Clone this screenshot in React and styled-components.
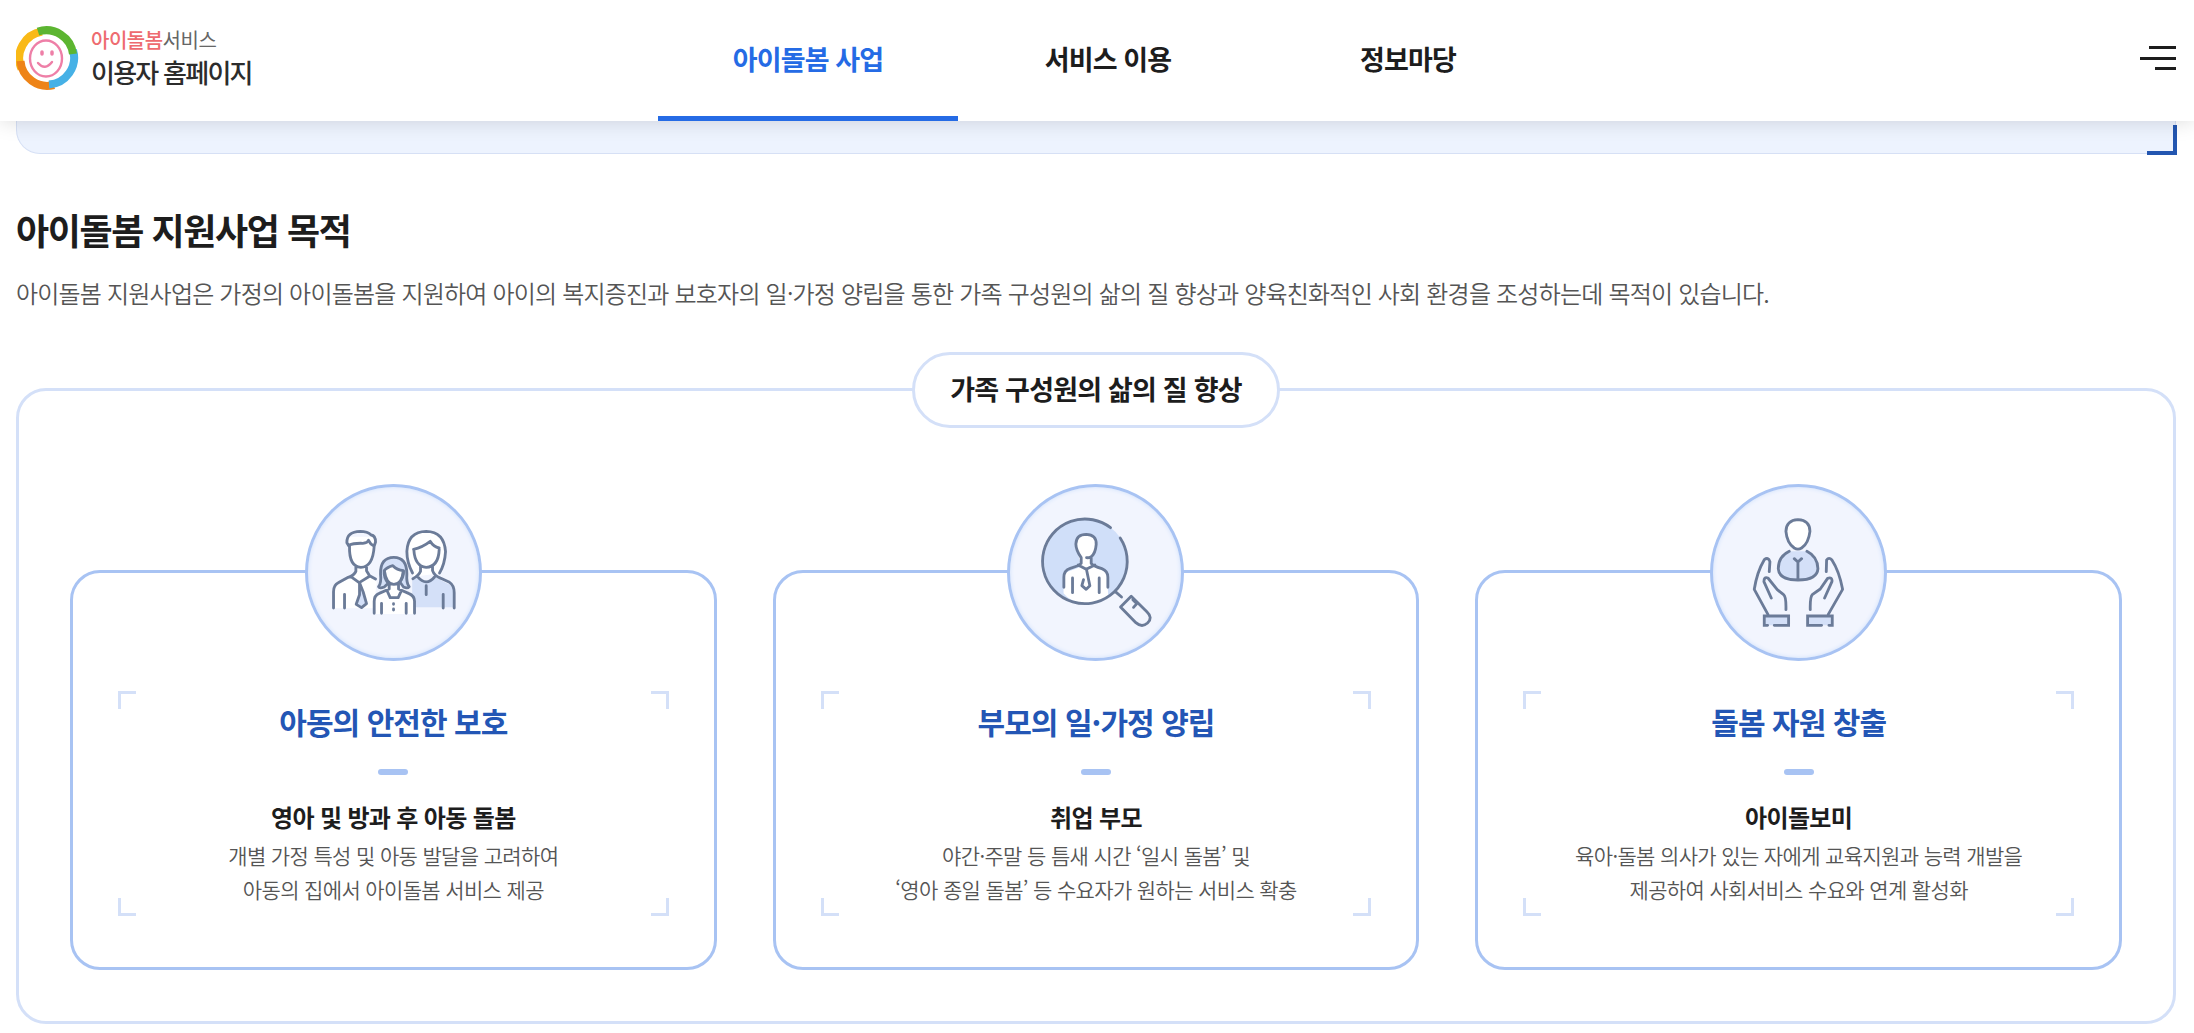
import React from 'react';
import styled, { createGlobalStyle } from 'styled-components';

const Global = createGlobalStyle`
  *, *::before, *::after { box-sizing: border-box; }
  body {
    margin: 0;
    background: #fff;
    color: #1d1d1d;
    font-family: "Noto Sans CJK KR", "Noto Sans", sans-serif;
    overflow: hidden;
  }
  h1, h2, h3, p, ul { margin: 0; padding: 0; }
`;

const Page = styled.div`
  height: 1033px;
  overflow: hidden;
`;

const Header = styled.header`
  position: relative;
  z-index: 2;
  display: grid;
  grid-template-columns: 658px 900px 1fr;
  height: 121px;
  padding: 0 18px 0 0;
  background: #fff;
  box-shadow: 0 0 20px rgba(0, 0, 0, 0.15);
`;

const Logo = styled.a`
  display: flex;
  align-items: flex-start;
  gap: 11px;
  padding: 25px 0 0 16px;
`;

const LogoText = styled.div`
  display: flex;
  flex-direction: column;
  padding-top: 2px;
`;

const LogoTop = styled.span`
  font-size: 20px;
  line-height: 26px;
  letter-spacing: -0.5px;
  white-space: nowrap;
  color: #666;
  b { font-weight: 500; color: #ee6b70; }
`;

const LogoName = styled.span`
  font-size: 26px;
  line-height: 38px;
  font-weight: 500;
  letter-spacing: -1.75px;
  white-space: nowrap;
  color: #2c2c2c;
`;

const Nav = styled.nav`
  display: grid;
  grid-template-columns: repeat(3, 300px);
`;

const NavItem = styled.a`
  display: flex;
  align-items: center;
  justify-content: center;
  border-bottom: 5px solid ${(p) => (p.$active ? '#256be5' : 'transparent')};
  color: ${(p) => (p.$active ? '#256be5' : '#1d1d1d')};
  font-size: 27px;
  letter-spacing: -0.85px;
  font-weight: 700;
`;

const MenuButton = styled.div`
  display: flex;
  flex-direction: column;
  align-items: flex-end;
  gap: 7.5px;
  padding-top: 46px;
`;

const MenuLine = styled.span`
  width: ${(p) => p.$w}px;
  height: 3px;
  background: #1d1d1d;
`;

const Main = styled.main`
  padding: 0 18px 0 16px;
`;

const IntroPanel = styled.div`
  display: flex;
  justify-content: flex-end;
  align-items: flex-end;
  height: 33px;
  border: 1px solid #d6e0f5;
  border-top: 0;
  border-radius: 0 0 0 24px;
  background: #edf3fe;
`;

const IntroCorner = styled.span`
  width: 30px;
  height: 30px;
  margin: 0 -2px -2px 0;
  flex: none;
  border: solid #2356b0;
  border-width: 0 4px 4px 0;
`;

const Heading = styled.h2`
  margin-top: 48px;
  font-size: 36px;
  line-height: 54px;
  letter-spacing: -1.4px;
  font-weight: 700;
`;

const Lede = styled.p`
  margin-top: 18px;
  font-size: 24px;
  line-height: 38px;
  letter-spacing: -0.8px;
  font-weight: 350;
  white-space: nowrap;
  color: #555;
`;

const Goals = styled.section`
  display: flex;
  flex-direction: column;
  align-items: center;
  height: 636px;
  margin-top: 76px;
  border: 3px solid #d4e0f8;
  border-radius: 30px;
`;

const Pill = styled.h3`
  flex: none;
  width: 368px;
  height: 76px;
  margin-top: -39px;
  border: 3px solid #d4e0f8;
  border-radius: 38px;
  background: #fff;
  text-align: center;
  font-size: 27px;
  letter-spacing: -0.8px;
  line-height: 68px;
  font-weight: 700;
  white-space: nowrap;
`;

const Cards = styled.div`
  align-self: stretch;
  display: grid;
  grid-template-columns: repeat(3, 1fr);
  gap: 56px;
  margin-top: 142px;
  padding: 0 51px;
`;

const Card = styled.article`
  display: flex;
  flex-direction: column;
  align-items: center;
  height: 400px;
  padding: 0 45px;
  border: 3px solid #a8c3f3;
  border-radius: 30px;
`;

const Badge = styled.div`
  flex: none;
  width: 177px;
  height: 177px;
  margin-top: -89px;
  border: 3px solid #a8c3f3;
  border-radius: 50%;
  background: #f2f5fe;
  box-shadow: inset 0 0 4px #cfe0fb;
  svg { display: block; width: 171px; height: 171px; }
`;

const tick = '#d4e0f8';
const Frame = styled.div`
  align-self: stretch;
  display: flex;
  flex-direction: column;
  align-items: center;
  height: 225px;
  margin-top: 30px;
  padding-top: 8px;
  background:
    linear-gradient(${tick}, ${tick}) 0 0 / 18px 3px,
    linear-gradient(${tick}, ${tick}) 0 0 / 3px 18px,
    linear-gradient(${tick}, ${tick}) 100% 0 / 18px 3px,
    linear-gradient(${tick}, ${tick}) 100% 0 / 3px 18px,
    linear-gradient(${tick}, ${tick}) 0 100% / 18px 3px,
    linear-gradient(${tick}, ${tick}) 0 100% / 3px 18px,
    linear-gradient(${tick}, ${tick}) 100% 100% / 18px 3px,
    linear-gradient(${tick}, ${tick}) 100% 100% / 3px 18px;
  background-repeat: no-repeat;
`;

const CardTitle = styled.h3`
  font-size: 30px;
  line-height: 44px;
  letter-spacing: -0.95px;
  font-weight: 700;
  color: #2356b5;
`;

const Dash = styled.span`
  width: 30px;
  height: 6px;
  margin-top: 26px;
  border-radius: 3px;
  background: #a8c3f3;
`;

const CardLead = styled.strong`
  margin-top: 24px;
  font-size: 24px;
  line-height: 36px;
  letter-spacing: -0.65px;
  font-weight: 700;
`;

const CardText = styled.p`
  margin-top: 3px;
  font-size: 21px;
  line-height: 34px;
  letter-spacing: -0.65px;
  font-weight: 350;
  text-align: center;
  white-space: pre-line;
  color: #555;
`;

const line = { fill: 'none', stroke: '#6b7b98', strokeLinecap: 'round', strokeLinejoin: 'round' };

function FamilyIcon() {
  return (
    <svg viewBox="0 0 171 171">
      <g transform="translate(-17.8,-17) scale(0.33333)" {...line} strokeWidth="8.5">
        <path fill="#fff" stroke="none" d="M175 200 H254 L248 258 228 285 230 310 260 335 250 415 H130 V365 Q132 345 190 320 L197 288 180 255Z" />
        <path fill="#fff" stroke="none" d="M350 250 Q352 184 408 184 Q466 186 466 250 L450 310 370 320Z" />
        <path fill="#d4e0f8" stroke="none" d="M366 330 L385 320 Q408 345 432 320 L470 340 Q492 348 492 370 V412 H366Z" />
        <path d="M176 228 L170 218 Q169 185 210 184 Q232 184 243 195 Q256 197 256 216 L252 228 M176 226 Q190 219 218 220 Q232 219 235 211 Q240 222 250 227 M178 228 Q176 290 212 292 Q248 292 252 228 M197 287 V304 Q192 316 174 322 L144 338 Q130 345 130 365 V414 M229 287 V302 L238 317 256 327 M182 320 L207 338 238 319 M163 373 V414" />
        <path fill="#d4e0f8" d="M208 338 V374 L198 403 214 413 229 401 219 366Z" />
        <path d="M367 309 Q350 278 350 244 Q353 185 408 184 Q462 185 466 245 Q464 282 448 309 M370 238 Q397 232 420 214 Q430 231 447 234 M371 240 Q374 289 408 292 Q445 290 447 238 M391 288 V304 Q386 317 368 326 M427 288 V302 Q432 317 452 325 L478 337 Q492 346 492 368 V414 M382 320 Q408 351 433 321 M408 347 V374 M459 373 V414" />
        <path fill="#fff" stroke="none" d="M252 432 V380 Q254 370 294 358 L296 340 275 320 290 285 330 285 344 320 324 340 V358 Q372 370 373 385 V432Z" />
        <path fill="#d4e0f8" d="M282 351 Q268 357 265 350 Q274 340 271 312 Q270 262 311 262 Q350 262 350 312 Q348 340 357 350 Q352 357 340 351 L329 336 Q341 320 340 302 Q320 300 308 287 Q290 292 282 302 Q280 322 294 340Z" />
        <path d="M283 304 Q288 342 311 343 Q336 342 339 304 M297 341 V357 L267 370 Q252 376 252 394 V430 M325 341 V357 L355 370 Q373 377 373 394 V430 M291 363 L300 383 H324 L333 363 M274 400 V430 M348 400 V430 M310 401 V403 M310 417 V420" />
      </g>
    </svg>
  );
}

function SearchIcon() {
  return (
    <svg viewBox="0 0 171 171">
      <g transform="translate(-19.8,-17) scale(0.33333)" {...line} strokeWidth="8.5">
        <circle cx="287" cy="275" r="126" fill="#d0dff9" stroke="none" />
        <path fill="#fff" stroke="none" d="M273 290 L257 225 Q257 193 288 193 Q319 193 319 225 L303 260 303 286 350 306 354 375 Q325 402 288 401 Q240 398 220 370 V310 L273 290Z" />
        <path d="M361 173 A127 127 0 1 0 390 204 M273 263 Q257 240 257 222 Q258 193 288 193 Q319 194 318 223 Q316 250 303 260 Q296 264 289 263 M273 263 V280 Q267 287 240 295 Q221 301 221 322 V352 M303 263 V280 Q309 288 335 296 Q353 303 353 322 V352 M264 285 L288 298 314 285 M247 324 V368 M327 324 V368 M289 299 L299 347 288 358 275 347 280 329 M378 367 L394 381" />
        <path d="M391 411 L423 379 470 425 Q489 443 472 459 Q455 474 437 458 L391 411 M428 389 L440 401 430 412" />
      </g>
    </svg>
  );
}

function HandsIcon() {
  return (
    <svg viewBox="0 0 171 171">
      <g transform="translate(-23.4,-17) scale(0.33333)" {...line} strokeWidth="8.5">
        <path fill="#fff" d="M325 149 Q361 151 361 184 Q357 220 336 234 Q325 241 314 234 Q292 219 289 184 Q290 151 325 149Z" />
        <path fill="#d4e0f8" stroke="none" d="M300 244 Q265 260 266 300 Q269 330 325 330 Q382 330 385 300 Q386 260 350 244Z" />
        <path d="M299 244 Q266 260 266 296 Q268 330 325 330 Q383 330 385 296 Q384 260 352 244 M325 275 V329 M314 266 L325 276 336 266" />
        <path d="M239 305 L241 275 Q236 260 224 269 Q202 306 194 358 L235 433 M245 384 L223 335 Q223 319 235 324 L263 359 282 374 Q290 380 289 419 M410 305 L411 270 Q418 260 427 270 Q449 304 459 358 L416 433 M405 384 L427 335 Q429 320 414 325 L392 357 368 374 Q361 382 362 419" />
        <path d="M234 466 H224 V438 H297 V466 H254 M418 466 H428 V438 H354 V466 H396" strokeLinejoin="miter" fill="#d4e0f8" />
      </g>
    </svg>
  );
}

function LogoMark() {
  return (
    <svg width="64" height="66" viewBox="0 0 64 66">
      <g fill="none" strokeWidth="8">
        <path stroke="#f9b916" d="M5.500 44 A27 27 0 0 1 26 6.500" />
        <path stroke="#ee8418" d="M4.500 36 A27 27 0 0 0 38 60" />
        <path stroke="#46b1e6" d="M33 59.500 A27 27 0 0 0 57 25" />
        <path stroke="#5cb531" d="M22 6.500 A27 27 0 0 1 57 29" />
      </g>
      <g fill="none" stroke="#ee7fa7" strokeWidth="2.4" strokeLinecap="round">
        <ellipse cx="30" cy="33.500" rx="16" ry="18" />
        <path d="M22 38 Q29 46 36 37" />
        <path d="M26 27 V29 M36 27 V29" strokeWidth="3.500" />
      </g>
    </svg>
  );
}

const NAV = ['아이돌봄 사업', '서비스 이용', '정보마당'];

const CARDS = [
  {
    Icon: FamilyIcon,
    title: '아동의 안전한 보호',
    lead: '영아 및 방과 후 아동 돌봄',
    text: '개별 가정 특성 및 아동 발달을 고려하여\n아동의 집에서 아이돌봄 서비스 제공',
  },
  {
    Icon: SearchIcon,
    title: '부모의 일·가정 양립',
    lead: '취업 부모',
    text: '야간·주말 등 틈새 시간 ‘일시 돌봄’ 및\n‘영아 종일 돌봄’ 등 수요자가 원하는 서비스 확충',
  },
  {
    Icon: HandsIcon,
    title: '돌봄 자원 창출',
    lead: '아이돌보미',
    text: '육아·돌봄 의사가 있는 자에게 교육지원과 능력 개발을\n제공하여 사회서비스 수요와 연계 활성화',
  },
];

export default function App() {
  return (
    <Page lang="ko">
      <Global />
      <Header>
        <Logo>
          <LogoMark />
          <LogoText>
            <LogoTop><b>아이돌봄</b>서비스</LogoTop>
            <LogoName>이용자 홈페이지</LogoName>
          </LogoText>
        </Logo>
        <Nav>
          {NAV.map((label, i) => (
            <NavItem key={label} $active={i === 0}>{label}</NavItem>
          ))}
        </Nav>
        <MenuButton>
          <MenuLine $w={27} />
          <MenuLine $w={36} />
          <MenuLine $w={21} />
        </MenuButton>
      </Header>
      <Main>
        <IntroPanel><IntroCorner /></IntroPanel>
        <Heading>아이돌봄 지원사업 목적</Heading>
        <Lede>
          아이돌봄 지원사업은 가정의 아이돌봄을 지원하여 아이의 복지증진과 보호자의 일·가정 양립을 통한 가족 구성원의 삶의 질 향상과 양육친화적인 사회 환경을 조성하는데 목적이 있습니다.
        </Lede>
        <Goals>
          <Pill>가족 구성원의 삶의 질 향상</Pill>
          <Cards>
            {CARDS.map(({ Icon, title, lead, text }) => (
              <Card key={title}>
                <Badge><Icon /></Badge>
                <Frame>
                  <CardTitle>{title}</CardTitle>
                  <Dash />
                  <CardLead>{lead}</CardLead>
                  <CardText>{text}</CardText>
                </Frame>
              </Card>
            ))}
          </Cards>
        </Goals>
      </Main>
    </Page>
  );
}
